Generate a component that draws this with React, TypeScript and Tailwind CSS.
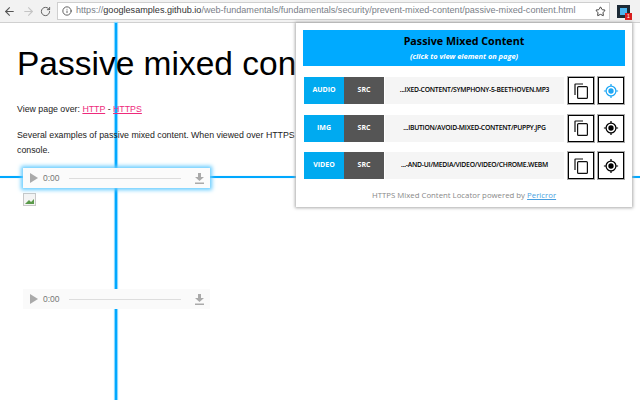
import { ArrowLeft, ArrowRight, RotateCw, Info, Star } from "lucide-react";

const ROWS = [
  { kind: "AUDIO", url: "...IXED-CONTENT/SYMPHONY-5-BEETHOVEN.MP3", active: true },
  { kind: "IMG", url: "...IBUTION/AVOID-MIXED-CONTENT/PUPPY.JPG", active: false },
  { kind: "VIDEO", url: "...-AND-UI/MEDIA/VIDEO/VIDEO/CHROME.WEBM", active: false },
];

function Target({ active }: { active: boolean }) {
  const color = active ? "#1ea7f5" : "#000000";
  return (
    <svg width="16" height="16" viewBox="0 0 18 18" fill="none">
      <circle cx="9" cy="9" r="5.5" stroke={color} strokeWidth="1.4" />
      <circle cx="9" cy="9" r="3" fill={color} />
      <path d="M9 1v2.5M9 14.5V17M1 9h2.5M14.5 9H17" stroke={color} strokeWidth="1.4" />
    </svg>
  );
}

function CopyIcon() {
  return (
    <svg width="14" height="16" viewBox="0 0 14 16" fill="none" stroke="#111111" strokeWidth="1.2">
      <path d="M1 12V1.500a.5.5 0 0 1 .5-.5H9" />
      <rect x="3.600" y="3.600" width="9.800" height="11.800" rx="1" />
    </svg>
  );
}

function AudioPlayer({ glow }: { glow?: boolean }) {
  return (
    <div
      className={`relative z-10 flex items-center w-[187px] h-[20px] pl-[7px] pr-[6px] ${
        glow ? "bg-[#fbfbfb] shadow-[0_0_4px_2px_#66ccff]" : "bg-[#fafafa]"
      }`}
    >
      <svg width="8" height="10" viewBox="0 0 8 10" className="shrink-0">
        <path d="M0 0l8 5-8 5z" fill="#aaaaaa" />
      </svg>
      <span className="ml-[5px] text-[8.500px] text-[#777] w-[25px]">0:00</span>
      <div className="ml-[1px] h-px w-[112px] bg-[#dddddd]" />
      <svg width="9" height="11" viewBox="0 0 9 11" className="ml-auto shrink-0">
        <path d="M3 0h3v4h3L4.500 8 0 4h3zM0 9.500h9V11H0z" fill="#aaaaaa" />
      </svg>
    </div>
  );
}

export default function App() {
  return (
    <div className="relative w-[640px] h-[400px] overflow-hidden bg-white font-['Liberation_Sans',sans-serif] text-black">
      {/* browser toolbar */}
      <div className="flex items-center h-[23px] bg-[#f2f2f2] border-b border-[#d0d0d0] pl-[3px]">
        <ArrowLeft size={13} className="text-[#555] shrink-0" />
        <ArrowRight size={13} className="ml-[6px] text-[#c4c4c4] shrink-0" />
        <RotateCw size={11} className="ml-[5px] text-[#555] shrink-0" />
        <div className="ml-[6px] flex items-center w-[553px] h-[18px] shrink-0 bg-white border border-[#cfcfcf] pl-[4px] pr-[3px] text-[9.100px] text-[#7a8088] whitespace-nowrap">
          <Info size={10} className="text-[#444] shrink-0" />
          <span className="ml-[4px]">
            https://<span className="text-[#333]">googlesamples.github.io</span>/web-fundamentals/fundamentals/security/prevent-mixed-content/passive-mixed-content.html
          </span>
          <Star size={11} className="ml-auto shrink-0 text-[#333]" />
        </div>
        <div className="relative ml-[7px] w-[13px] h-[13px] shrink-0 bg-[#1c2a36]">
          <div className="m-[3px] w-[7px] h-[7px] bg-[#4cb5f0]" />
          <div className="absolute left-[8px] top-[8px] w-[7px] h-[7px] bg-[#d81e1e] text-white text-[5px] leading-[7px] text-center">1</div>
        </div>
      </div>

      {/* highlight crosshair */}
      <div className="absolute left-[115px] top-[23px] w-[2px] h-[377px] bg-[#00a8ff] shadow-[0_0_1px_1px_#7fd4ff]" />
      <div className="absolute left-0 top-[176px] w-[640px] h-[2px] bg-[#00a8ff] shadow-[0_0_1px_#7fd4ff]" />

      {/* page */}
      <div className="relative pl-[17px]">
        <h1 className="mt-[18px] text-[33.500px] leading-[46px] whitespace-nowrap">Passive mixed content</h1>
        <p className="mt-[15px] text-[8.800px] leading-[15px] text-[#222]">
          View page over: <a className="underline text-[#ee2a7b]">HTTP</a> - <a className="underline text-[#ee2a7b]">HTTPS</a>
        </p>
        <p className="mt-[11px] text-[8.800px] leading-[15px] text-[#222] whitespace-nowrap">
          Several examples of passive mixed content. When viewed over HTTPS m
          <br />
          console.
        </p>
        <div className="mt-[10px] ml-[6px]">
          <AudioPlayer glow />
        </div>
        <div className="mt-[5px] ml-[6px] w-[13px] h-[13px] border border-[#c8c8c8] bg-[#f4f4f4]">
          <svg width="11" height="11" viewBox="0 0 11 11">
            <path d="M1 10l4-4 2 2 3-3v5z" fill="#5a9a4a" />
          </svg>
        </div>
        <div className="mt-[83px] ml-[6px]">
          <AudioPlayer />
        </div>
      </div>

      {/* extension popup */}
      <div className="absolute z-20 left-[296px] top-[23px] w-[336px] h-[184px] bg-white shadow-[0_0_3px_1px_#aaaaaa] px-[7px] pt-[7px] font-['Open_Sans',sans-serif]">
        <div className="flex flex-col items-center h-[36px] bg-[#00aaff]">
          <div className="mt-[3px] text-[10.700px] leading-[16px] font-bold">Passive Mixed Content</div>
          <div className="mt-[1px] text-[7.400px] leading-[12px] font-bold italic text-white">(click to view element on page)</div>
        </div>
        <div className="mt-[11px] flex flex-col gap-[10.500px]">
          {ROWS.map((r) => (
            <div key={r.kind} className="flex h-[27px] ml-px">
              <div className="flex items-center justify-center w-[40px] bg-[#00aaf0] text-white text-[7px] font-bold">{r.kind}</div>
              <div className="flex items-center justify-center w-[40px] bg-[#555555] text-white text-[7px] font-bold">SRC</div>
              <div className="ml-px flex items-center justify-center w-[179px] bg-[#f5f5f5] text-[6.800px] tracking-[-0.25px] font-semibold whitespace-nowrap">{r.url}</div>
              <button className="ml-[4px] flex items-center justify-center w-[26px] border border-black bg-white shadow-[0_0_0_1px_#aaaaaa]">
                <CopyIcon />
              </button>
              <button className="ml-[4px] flex items-center justify-center w-[26px] border border-black bg-white shadow-[0_0_0_1px_#aaaaaa]">
                <Target active={r.active} />
              </button>
            </div>
          ))}
        </div>
        <div className="mt-[11px] text-center text-[7.800px] text-[#888]">
          HTTPS Mixed Content Locator powered by <a className="underline text-[#4a9fe0]">Pericror</a>
        </div>
      </div>
    </div>
  );
}
